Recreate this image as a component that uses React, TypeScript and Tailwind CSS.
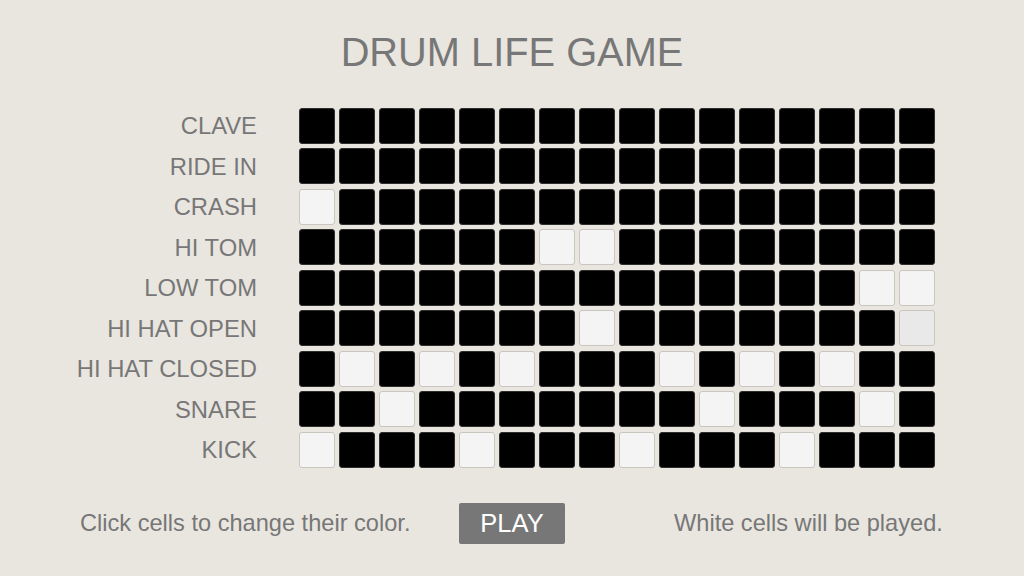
const labels = [
  "CLAVE",
  "RIDE IN",
  "CRASH",
  "HI TOM",
  "LOW TOM",
  "HI HAT OPEN",
  "HI HAT CLOSED",
  "SNARE",
  "KICK",
];

// 0 = black, 1 = white, 2 = hovered (light grey)
const grid: number[][] = [
  [0, 0, 0, 0, 0, 0, 0, 0, 0, 0, 0, 0, 0, 0, 0, 0],
  [0, 0, 0, 0, 0, 0, 0, 0, 0, 0, 0, 0, 0, 0, 0, 0],
  [1, 0, 0, 0, 0, 0, 0, 0, 0, 0, 0, 0, 0, 0, 0, 0],
  [0, 0, 0, 0, 0, 0, 1, 1, 0, 0, 0, 0, 0, 0, 0, 0],
  [0, 0, 0, 0, 0, 0, 0, 0, 0, 0, 0, 0, 0, 0, 1, 1],
  [0, 0, 0, 0, 0, 0, 0, 1, 0, 0, 0, 0, 0, 0, 0, 2],
  [0, 1, 0, 1, 0, 1, 0, 0, 0, 1, 0, 1, 0, 1, 0, 0],
  [0, 0, 1, 0, 0, 0, 0, 0, 0, 0, 1, 0, 0, 0, 1, 0],
  [1, 0, 0, 0, 1, 0, 0, 0, 1, 0, 0, 0, 1, 0, 0, 0],
];

const cellClass = (v: number) => {
  if (v === 1) return "bg-[#f4f4f4] border-[#c9c6c0]";
  if (v === 2) return "bg-[#e9e9e9] border-[#c9c6c0]";
  return "bg-black border-[#2e2e2e]";
};

export default function App() {
  return (
    <div className="w-full h-screen bg-[#e9e6e0] text-[#777777] font-['Liberation_Sans',Arial,sans-serif] flex flex-col">
      <h1 className="pt-[33px] text-center text-[39.8px] leading-none">DRUM LIFE GAME</h1>

      <div className="mt-[35.2px] flex flex-col gap-[4.5px]">
        {grid.map((row, i) => (
          <div key={labels[i]} className="flex items-center h-[36px]">
            <div className="w-[257px] text-right text-[23.8px] whitespace-nowrap">{labels[i]}</div>
            <div className="ml-[42px] flex gap-[4px]">
              {row.map((v, j) => (
                <div key={j} className={"w-[36px] h-[36px] rounded-[3px] border " + cellClass(v)} />
              ))}
            </div>
          </div>
        ))}
      </div>

      <div className="mt-[35px] flex items-center pl-[80px] text-[23.6px]">
        <span className="w-[330px] whitespace-nowrap">Click cells to change their color.</span>
        <button className="ml-[49px] w-[106px] h-[41px] bg-[#777777] text-white rounded-[2px] text-[25.5px] leading-none">
          PLAY
        </button>
        <span className="ml-[109px] whitespace-nowrap">White cells will be played.</span>
      </div>
    </div>
  );
}
